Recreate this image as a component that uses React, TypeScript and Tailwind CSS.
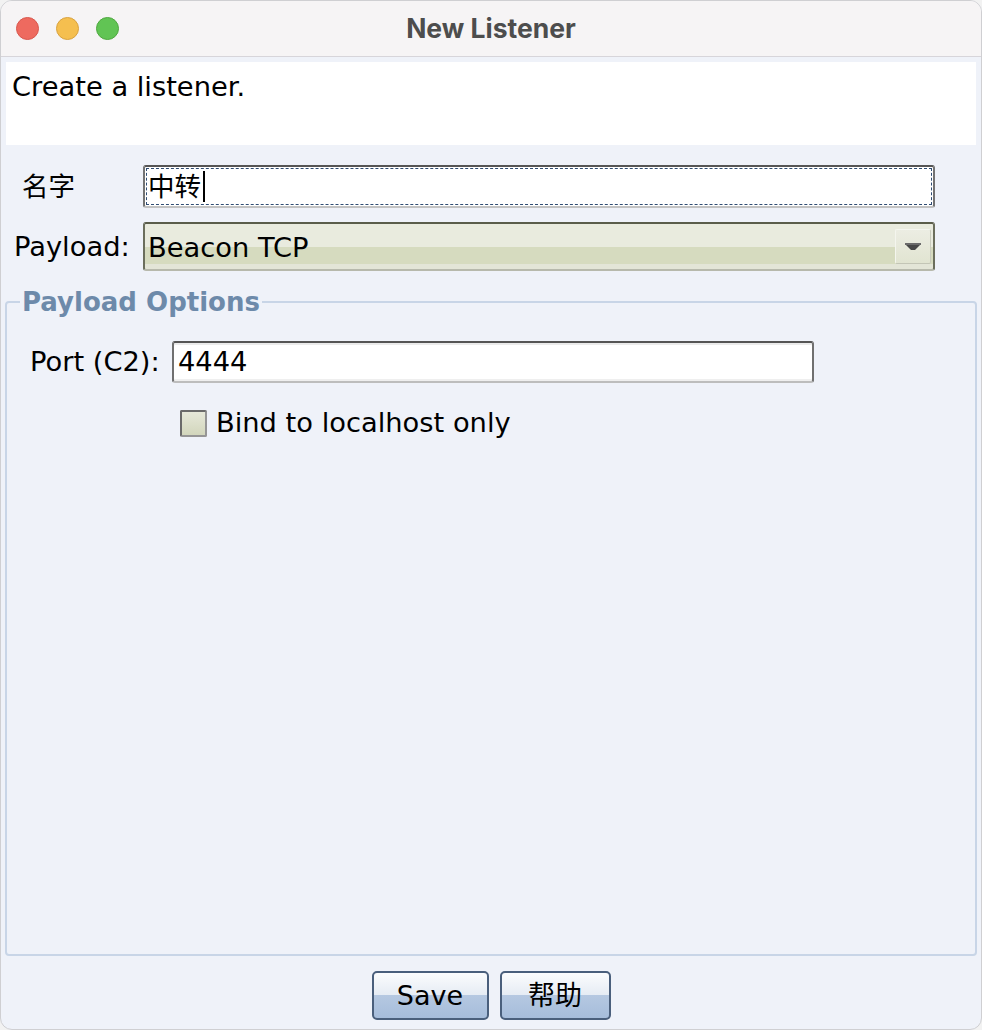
import React from "react";

export default function App() {
  const sans = "font-['DejaVu_Sans','Noto_Sans_CJK_SC',sans-serif]";
  const btn =
    "h-[49px] rounded-[5px] border-2 border-[#4a5f7c] bg-[linear-gradient(#fbfcfd_0%,#e6ecf4_48%,#b5c8e1_50%,#a6bddb_100%)] flex items-center justify-center text-[27px] leading-[32px]";
  return (
    <div className="w-[982px] h-[1030px] bg-[#f2f2f2]">
      <div className={`h-full rounded-[12px] overflow-hidden bg-[#eff2f9] flex flex-col border border-[#cfcfd2] ${sans} text-black`}>
        {/* Title bar */}
        <div className="h-[56px] shrink-0 bg-[#f6f4f5] border-b border-[#d7d5da] grid grid-cols-[1fr_auto_1fr] items-center">
          <div className="flex items-center gap-[17px] pl-[15px]">
            <div className="w-[23px] h-[23px] rounded-full bg-[#ee6a5f] border border-[#d9574d]" />
            <div className="w-[23px] h-[23px] rounded-full bg-[#f5bf4f] border border-[#d9a23f]" />
            <div className="w-[23px] h-[23px] rounded-full bg-[#61c454] border border-[#4fa83f]" />
          </div>
          <div className="font-['Inter',sans-serif] font-bold text-[26.5px] leading-[30px] -mt-[2px] text-[#4d4d4d]">New Listener</div>
          <div />
        </div>

        {/* Description panel */}
        <div className="mt-[5px] mx-[5px] h-[83px] shrink-0 bg-white pl-[6px] pt-[9px] text-[27.3px] leading-[32px]">
          Create a listener.
        </div>

        {/* Name row */}
        <div className="mt-[20px] flex items-center h-[43px] shrink-0">
          <div className="w-[142px] pl-[21px] text-[26.5px] leading-[32px]">名字</div>
          <div className="w-[792px] h-[43px] rounded-[3px] border-2 border-t-[#555555] border-x-[#737373] border-b-[#c2c2c2] bg-white p-[1px]">
            <div className="h-full border border-dashed border-[#2f4c72] flex items-center pl-[1px] text-[26.5px] leading-[32px]">
              <span>中转</span>
              <span className="ml-[2px] w-[2px] h-[31px] bg-black" />
            </div>
          </div>
        </div>

        {/* Payload row */}
        <div className="mt-[14px] flex items-center h-[49px] shrink-0">
          <div className="w-[142px] pl-[13px] text-[27.3px] leading-[32px]">Payload:</div>
          <div className="w-[792px] h-[49px] rounded-[3px] border-2 border-t-[#5a5d4a] border-x-[#6b6e5c] border-b-[#b7b9ac] flex items-center bg-[linear-gradient(#e9ebde_0%,#e9ebde_52%,#d6dbbf_52%,#d6dbbf_88%,#e3e5d7_88%,#e3e5d7_100%)]">
            <div className="flex-1 pl-[3px] pt-[2px] text-[27.3px] leading-[32px]">Beacon TCP</div>
            <div className="w-[36px] h-[35px] mr-[2px] rounded-[2px] border border-t-[#f4f5ee] border-l-[#f4f5ee] border-r-[#c9cbbd] border-b-[#c3c5b6] bg-[linear-gradient(#ecede3,#e1e4d1)] flex items-center justify-center">
              <svg width="16" height="7" viewBox="0 0 16 7">
                <rect x="0" y="0" width="16" height="2" fill="#6a6a6a" />
                <polygon points="1,2 15,2 10,7 6,7" fill="#474747" />
              </svg>
            </div>
          </div>
        </div>

        {/* Payload Options */}
        <fieldset className="mt-[14px] mx-[4px] flex-1 min-w-0 border-2 border-[#c8d5e7] rounded-[4px]">
          <legend className="ml-[13px] px-[2px] text-[26px] leading-[34px] font-bold text-[#6d8aaa]">Payload Options</legend>
          <div className="mt-[22px] flex items-center h-[42px]">
            <div className="w-[165px] shrink-0 pl-[23px] text-[27.3px] leading-[32px]">Port (C2):</div>
            <div className="w-[642px] h-[42px] rounded-[3px] border-2 border-t-[#555555] border-x-[#707070] border-b-[#bdbdbd] bg-white shadow-[inset_0_2px_0_#ebebeb,inset_0_-2px_0_#efefef] flex items-center pl-[4px] text-[27.3px] leading-[32px]">
              4444
            </div>
          </div>
          <div className="mt-[24px] flex items-center pl-[173px] gap-[9px]">
            <div className="w-[27px] h-[27px] rounded-[2px] border-2 border-t-[#6a6a6a] border-l-[#6a6a6a] border-r-[#959595] border-b-[#959595] bg-[linear-gradient(#e6e8d9,#d2d6bc)]" />
            <div className="text-[27.3px] leading-[32px]">Bind to localhost only</div>
          </div>
        </fieldset>

        {/* Buttons */}
        <div className="shrink-0 pt-[15px] pb-[9px] flex justify-center gap-[11px]">
          <div className={`w-[117px] ${btn}`}>Save</div>
          <div className={`w-[111px] ${btn}`}>帮助</div>
        </div>
      </div>
    </div>
  );
}
